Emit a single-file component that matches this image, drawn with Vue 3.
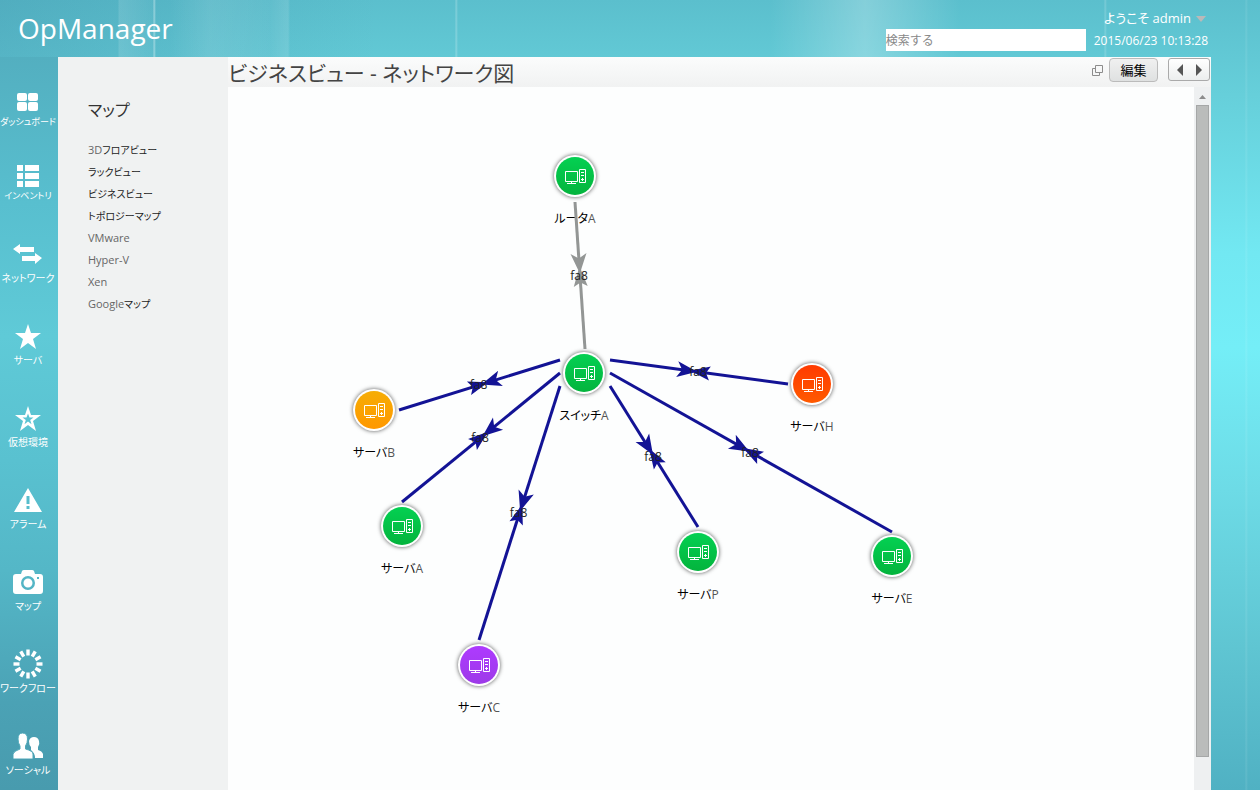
<script setup>
import { ref } from 'vue'

const search = ref('')

const railItems = [
  { icon: 'dashboard', label: 'ダッシュボード', small: true },
  { icon: 'inventory', label: 'インベントリ', small: true },
  { icon: 'network', label: 'ネットワーク' },
  { icon: 'server', label: 'サーバ' },
  { icon: 'virtual', label: '仮想環境' },
  { icon: 'alarm', label: 'アラーム' },
  { icon: 'map', label: 'マップ' },
  { icon: 'workflow', label: 'ワークフロー' },
  { icon: 'social', label: 'ソーシャル' }
]

const menuItems = [
  { en: '3D', jp: 'フロアビュー' },
  { en: '', jp: 'ラックビュー' },
  { en: '', jp: 'ビジネスビュー' },
  { en: '', jp: 'トポロジーマップ' },
  { en: 'VMware', jp: '' },
  { en: 'Hyper-V', jp: '' },
  { en: 'Xen', jp: '' },
  { en: 'Google', jp: 'マップ' }
]

const nodes = [
  { jp: 'ルータ', en: 'A', x: 347, y: 89, status: 'clear' },
  { jp: 'スイッチ', en: 'A', x: 356, y: 286, status: 'clear' },
  { jp: 'サーバ', en: 'B', x: 146, y: 323, status: 'trouble' },
  { jp: 'サーバ', en: 'A', x: 174, y: 439, status: 'clear' },
  { jp: 'サーバ', en: 'C', x: 251, y: 578, status: 'down' },
  { jp: 'サーバ', en: 'P', x: 470, y: 465, status: 'clear' },
  { jp: 'サーバ', en: 'E', x: 664, y: 469, status: 'clear' },
  { jp: 'サーバ', en: 'H', x: 584, y: 297, status: 'critical' }
]

const links = [
  { x1: 347, y1: 115, x2: 357, y2: 262, color: '#939695' },
  { x1: 332, y1: 273, x2: 171, y2: 323, color: '#131395' },
  { x1: 332, y1: 286, x2: 174, y2: 415, color: '#131395' },
  { x1: 332, y1: 299, x2: 251, y2: 553, color: '#131395' },
  { x1: 382, y1: 299, x2: 470, y2: 440, color: '#131395' },
  { x1: 382, y1: 286, x2: 664, y2: 445, color: '#131395' },
  { x1: 382, y1: 273, x2: 560, y2: 297, color: '#131395' }
]

// the two arrow heads meet just before the middle of the link
const arrowAt = (l) => {
  const angle = Math.atan2(l.y2 - l.y1, l.x2 - l.x1) * 180 / Math.PI
  return `translate(${(l.x1 + l.x2) / 2} ${(l.y1 + l.y2) / 2}) rotate(${angle})`
}
</script>

<template>
  <div class="page">
    <header class="header">
      <h1 class="logo">OpManager</h1>
      <div class="account">
        <button type="button" class="user">
          ようこそ admin
          <svg width="10" height="6" viewBox="0 0 10 6"><path d="M0 0H10L5 6Z" fill="#b9b9b9" /></svg>
        </button>
        <form class="search-row" @submit.prevent>
          <input v-model="search" type="text" class="search" placeholder="検索する" aria-label="検索する">
          <span class="clock">2015/06/23 10:13:28</span>
        </form>
      </div>
    </header>

    <div class="body">
      <nav class="rail">
        <a v-for="item in railItems" :key="item.icon" href="#" class="rail-item" :class="{ small: item.small }">
          <span class="rail-icon">
            <svg v-if="item.icon === 'dashboard'" width="22" height="18" viewBox="0 0 22 18">
              <rect x="0" y="0" width="10" height="8" rx="2" />
              <rect x="11" y="0" width="10" height="8" rx="2" />
              <rect x="0" y="9" width="10" height="9" rx="2" />
              <rect x="11" y="9" width="10" height="9" rx="2" />
            </svg>
            <svg v-else-if="item.icon === 'inventory'" width="22" height="22" viewBox="0 0 22 22">
              <path d="M0 0H6V6H0ZM8 0H22V6H8ZM0 8H6V14H0ZM8 8H22V14H8ZM0 16H6V22H0ZM8 16H22V22H8Z" />
            </svg>
            <svg v-else-if="item.icon === 'network'" width="30" height="20" viewBox="0 0 30 20">
              <path d="M0 5L7 0V3H21V8H7V10ZM29 14L22 9V12H9V17H22V20Z" />
            </svg>
            <svg v-else-if="item.icon === 'server'" width="26" height="25" viewBox="0 0 26 25">
              <path d="M13 0L16 9H26L18 15L21 25L13 19L5 25L8 15L0 9H10Z" />
            </svg>
            <svg v-else-if="item.icon === 'virtual'" width="26" height="25" viewBox="0 0 26 25">
              <path
                fill-rule="evenodd"
                d="M13 0L16 9H26L18 15L21 25L13 19L5 25L8 15L0 9H10ZM13 7.500L11.500 11.500H7.500L10.800 14L9.500 18.300L13 15.600L16.500 18.300L15.200 14L18.500 11.500H14.500Z"
              />
            </svg>
            <svg v-else-if="item.icon === 'alarm'" width="28" height="24" viewBox="0 0 28 24">
              <path fill-rule="evenodd" d="M14 0L28 24H0ZM12.500 8V16H15.500V8ZM12.500 18V21H15.500V18Z" />
            </svg>
            <svg v-else-if="item.icon === 'map'" width="30" height="24" viewBox="0 0 30 24">
              <path
                fill-rule="evenodd"
                d="M8 4L9 1Q9.500 0 11 0H19Q20.500 0 21 1L22 4H27Q30 4 30 7V21Q30 24 27 24H3Q0 24 0 21V7Q0 4 3 4ZM15 6A7 7 0 1 0 15 20A7 7 0 1 0 15 6ZM15 8.500A4.500 4.500 0 1 1 15 17.500A4.500 4.500 0 1 1 15 8.500ZM24 7V9H26V7Z"
              />
            </svg>
            <svg v-else-if="item.icon === 'workflow'" width="30" height="30" viewBox="-15 -15 30 30">
              <rect v-for="n in 12" :key="n" x="-1.700" y="-14.500" width="3.400" height="6" :transform="`rotate(${n * 30})`" />
            </svg>
            <svg v-else width="30" height="26" viewBox="0 0 30 26">
              <path d="M17 25Q23 25 30 25V21Q29 18 25 17V14Q27 11 26 8Q25 4 21 4Q17 4 16 8Q16 12 18 14V17Q22 20 22 25Z" />
              <path
                d="M0 26V21Q1 18 7 16V13Q5 10 5 6Q5 0 9.500 0Q14.500 0 14.500 6Q14.500 10 12.500 13V16Q20 18 20 21V26Z"
                stroke="#4fa8b9"
              />
            </svg>
          </span>
          <span class="rail-label">{{ item.label }}</span>
        </a>
      </nav>

      <aside class="submenu">
        <h2>マップ</h2>
        <ul>
          <li v-for="m in menuItems" :key="m.en + m.jp">
            <a href="#">{{ m.en }}<span>{{ m.jp }}</span></a>
          </li>
        </ul>
      </aside>

      <main class="content">
        <div class="title-bar">
          <h2>ビジネスビュー - ネットワーク図</h2>
          <div class="tools">
            <button type="button" class="popout" aria-label="別ウィンドウ">
              <svg width="11" height="11" viewBox="0 0 11 11" fill="none" stroke="#8c8c8c">
                <path d="M3.500 .5H10.500V7.500H3.500ZM3 3.500H.5V10.500H7.500V8" />
              </svg>
            </button>
            <button type="button" class="edit">編集</button>
            <div class="pager">
              <button type="button" aria-label="前へ">
                <svg width="6" height="12" viewBox="0 0 6 12"><path d="M6 0V12L0 6Z" fill="#555" /></svg>
              </button>
              <button type="button" aria-label="次へ">
                <svg width="6" height="12" viewBox="0 0 6 12"><path d="M0 0V12L6 6Z" fill="#555" /></svg>
              </button>
            </div>
          </div>
        </div>

        <div class="map-area">
          <svg class="map">
            <defs>
              <linearGradient id="clear" x2="0" y2="1"><stop stop-color="#04d052" /><stop offset="1" stop-color="#04b43d" /></linearGradient>
              <linearGradient id="trouble" x2="0" y2="1"><stop stop-color="#f6ad05" /><stop offset="1" stop-color="#ff9800" /></linearGradient>
              <linearGradient id="critical" x2="0" y2="1"><stop stop-color="#ff3a00" /><stop offset="1" stop-color="#ff5a00" /></linearGradient>
              <linearGradient id="down" x2="0" y2="1"><stop stop-color="#ae3aff" /><stop offset="1" stop-color="#9d3ae8" /></linearGradient>
            </defs>

            <g v-for="n in nodes" :key="n.jp + n.en" :transform="`translate(${n.x} ${n.y})`">
              <circle class="ring" r="21" />
              <circle r="19" :fill="`url(#${n.status})`" />
              <g fill="none" stroke="#fff">
                <path d="M-9.500 -4.500H2.500V5.500H-9.500ZM-8 7.500H1M-3.500 5V7" />
                <path d="M4.500 -6.500H10.500V6.500H4.500ZM6 -3.500H9M6 -.5H9M6 3.500H9M7.500 2V5" />
              </g>
              <text class="node-label" y="47">{{ n.jp }}<tspan>{{ n.en }}</tspan></text>
            </g>

            <g v-for="(l, i) in links" :key="i" :fill="l.color">
              <line :x1="l.x1" :y1="l.y1" :x2="l.x2" :y2="l.y2" :stroke="l.color" stroke-width="3" />
              <path :transform="arrowAt(l)" d="M-2 0L-22 8L-17 0L-22 -8ZM-9 0L11 7L7 0L11 -7Z" />
              <text class="link-label" :x="(l.x1 + l.x2) / 2 - 1" :y="(l.y1 + l.y2) / 2 + 4">fa8</text>
            </g>
          </svg>
          <div class="scrollbar">
            <svg width="7" height="4" viewBox="0 0 7 4"><path d="M0 4L3.500 0L7 4Z" fill="#8c8c8c" /></svg>
            <div class="thumb"></div>
          </div>
        </div>
      </main>
    </div>
  </div>
</template>

<style>
body {
  margin: 0;
}
</style>

<style scoped>
.page {
  height: 100vh;
  display: flex;
  flex-direction: column;
  overflow: hidden;
  font-family: "Open Sans", "Noto Sans CJK JP", sans-serif;
  font-feature-settings: "palt";
  background:
    linear-gradient(90deg, transparent 118px, rgba(255, 255, 255, .12) 119px, rgba(255, 255, 255, .03) 153px, rgba(255, 255, 255, .4) 154px, transparent 156px, transparent 170px, rgba(255, 255, 255, .1) 210px, rgba(255, 255, 255, .05) 270px, rgba(255, 255, 255, .12) 288px, transparent 290px, transparent 455px, rgba(255, 255, 255, .25) 456px, transparent 458px, transparent 770px, rgba(255, 255, 255, .25) 865px, transparent 960px, transparent 1104px, rgba(255, 255, 255, .2) 1105px, transparent 1107px, transparent 1245px, rgba(255, 255, 255, .1) 1246px, transparent 1248px),
    linear-gradient(90deg, rgba(50, 120, 150, .25), transparent 30%),
    linear-gradient(#5bbfcd, #66cfda 12%, #72e8f2 32%, #74eef7 44%, #6ddbe6 62%, #5fc5d2 82%, #50b1c3);
}

h1, h2, ul {
  margin: 0;
  padding: 0;
  font-weight: 400;
}

button {
  padding: 0;
  border: none;
  background: none;
  font-family: inherit;
  font-feature-settings: inherit;
  cursor: pointer;
}

a {
  text-decoration: none;
}

svg {
  display: block;
}

.header {
  height: 57px;
  flex: none;
  display: flex;
  justify-content: space-between;
  padding: 0 52px 0 18px;
  box-sizing: border-box;
  color: #fff;
}

.logo {
  font-size: 28px;
  line-height: 56px;
}

.account {
  display: flex;
  flex-direction: column;
  align-items: flex-end;
  padding-top: 8px;
}

.user {
  display: flex;
  align-items: center;
  gap: 5px;
  padding-right: 2px;
  color: #fff;
  font-size: 13px;
  line-height: 21px;
}

.search-row {
  display: flex;
  align-items: center;
  gap: 8px;
}

.search {
  width: 200px;
  height: 22px;
  padding: 0;
  border: none;
  box-sizing: border-box;
  background: #fff;
  font-family: inherit;
  font-size: 12px;
  color: #333;
}

.search::placeholder {
  color: #888;
}

.clock {
  font-size: 12px;
}

.body {
  flex: 1;
  min-height: 0;
  display: flex;
  padding-right: 49px;
}

.rail {
  width: 58px;
  flex: none;
  display: flex;
  flex-direction: column;
  gap: 34px;
  padding: 33px 2px 0 0;
  box-sizing: border-box;
  background: linear-gradient(#53afc0, #58bfcf 20%, #5fcad7 38%, #59c1d0 55%, #54b7c7 70%, #4ba2b5 88%, #489bae);
}

.rail-item {
  flex: none;
  display: flex;
  flex-direction: column;
  align-items: center;
  color: #fff;
}

.rail-icon {
  height: 32px;
  display: flex;
  align-items: center;
  fill: #fff;
}

.small .rail-icon {
  height: 24px;
}

.rail-label {
  font-size: 10px;
  line-height: 16px;
  white-space: nowrap;
}

.small .rail-label {
  font-size: 9px;
}

.submenu {
  width: 170px;
  flex: none;
  padding: 40px 0 0 30px;
  box-sizing: border-box;
  background: #f0f2f2;
}

.submenu h2 {
  font-size: 16px;
  line-height: 26px;
  color: #333;
}

.submenu ul {
  padding-top: 16px;
  list-style: none;
}

.submenu li {
  height: 22px;
}

.submenu a {
  display: block;
  font-size: 11px;
  line-height: 22px;
  color: #666;
}

.submenu span {
  font-size: 10px;
  color: #222;
}

.content {
  flex: 1;
  min-width: 0;
  display: flex;
  flex-direction: column;
  background: #fdfefe;
}

.title-bar {
  height: 30px;
  flex: none;
  display: flex;
  justify-content: space-between;
  background: linear-gradient(#fbfcfc, #f1f2f2);
}

.title-bar h2 {
  font-size: 21px;
  line-height: 33px;
  color: #444;
  white-space: nowrap;
}

.tools {
  display: flex;
  align-items: flex-start;
  padding: 1px 1px 0 0;
}

.popout {
  height: 24px;
  margin-right: 6px;
}

.edit {
  width: 49px;
  height: 24px;
  margin-right: 10px;
  border: 1px solid #bbb;
  border-radius: 4px;
  background: linear-gradient(#f0f0f0, #dfe1e1);
  font-size: 13px;
  line-height: 20px;
  color: #000;
}

.pager {
  width: 42px;
  height: 23px;
  display: flex;
  justify-content: center;
  gap: 13px;
  border: 1px solid #aaa;
  border-radius: 3px;
  box-sizing: border-box;
  background: linear-gradient(#fff, #eceeee);
}

.map-area {
  flex: 1;
  min-height: 0;
  display: flex;
}

.map {
  flex: 1;
  min-width: 0;
  height: 100%;
}

.ring {
  fill: #fff;
  filter: drop-shadow(0 0 2px rgba(0, 0, 0, .65));
}

.node-label {
  font-size: 12px;
  text-anchor: middle;
  fill: #000;
}

.node-label tspan {
  fill: #555;
}

.link-label {
  font-size: 12px;
  text-anchor: middle;
  fill: #222;
}

.scrollbar {
  width: 17px;
  display: flex;
  flex-direction: column;
  align-items: center;
  gap: 6px;
  padding: 8px 0 33px;
  box-sizing: border-box;
  background: #eef0f1;
}

.scrollbar svg {
  flex: none;
}

.thumb {
  width: 13px;
  flex: 1;
  border: 1px solid #a5a7a7;
  box-sizing: border-box;
  background: #babcbb;
}
</style>
